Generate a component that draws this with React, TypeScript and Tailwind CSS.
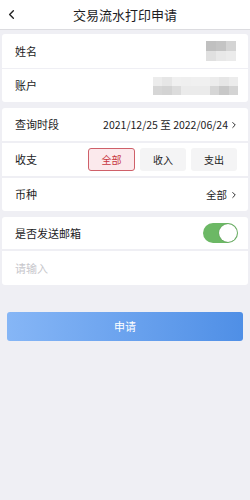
import { ChevronLeft, ChevronRight } from 'lucide-react'

const nameBlocks = [
  ['#c0c0c0', '#c4c4c4', '#d4d4d4'],
  ['#e0e0e0', '#e8e8e8', '#ebebeb'],
]

const accountBlocks = [
  ['#ececec', '#e6e6e6', '#f0f0f0', '#efefef', '#f0f0f0', '#f0f0f0', '#ececec', '#e6e6e6', '#ececec'],
  ['#d6d6d6', '#d3d3d3', '#dcdcdc', '#ebebeb', '#ebebeb', '#ebebeb', '#d6d6d6', '#c8c8c8', '#d4d4d4'],
]

function Mosaic({ rows, cell }: { rows: string[][]; cell: string }) {
  return (
    <div className="flex flex-col">
      {rows.map((row, i) => (
        <div key={i} className="flex">
          {row.map((c, j) => (
            <div key={j} className={cell} style={{ backgroundColor: c }} />
          ))}
        </div>
      ))}
    </div>
  )
}

export default function App() {
  return (
    <div
      className="w-[250px] h-[500px] bg-[#efeff4] text-[#1c1c1e] text-[11px]"
      style={{ fontFamily: '"Noto Sans CJK SC", "Noto Sans", sans-serif' }}
    >
      {/* Header */}
      <div className="relative h-[30px] bg-white border-b border-[#dcdce0] flex items-center justify-center">
        <ChevronLeft className="absolute left-[4px] top-[7px] h-[15px] w-[15px] text-[#222]" strokeWidth={2.2} />
        <span className="text-[13px]">交易流水打印申请</span>
      </div>

      {/* Card 1 */}
      <div className="mx-[2px] mt-[4px] bg-white rounded-[3px]">
        <div className="h-[35px] flex items-center justify-between pl-[13px] pr-[12px] border-b border-[#efeff4]">
          <span>姓名</span>
          <Mosaic rows={nameBlocks} cell="w-[10px] h-[10px]" />
        </div>
        <div className="h-[33px] flex items-center justify-between pl-[13px] pr-[10px]">
          <span>账户</span>
          <Mosaic rows={accountBlocks} cell="w-[9.5px] h-[9px]" />
        </div>
      </div>

      {/* Card 2 */}
      <div className="mx-[2px] mt-[6px] bg-white rounded-[3px]">
        <div className="h-[35px] flex items-center justify-between pl-[13px] pr-[9px] border-b-2 border-[#efeff4]">
          <span>查询时段</span>
          <div className="flex items-center gap-[1px]">
            <span className="text-[10.5px]">2021/12/25 至 2022/06/24</span>
            <ChevronRight className="h-[10px] w-[10px]" strokeWidth={2.2} />
          </div>
        </div>
        <div className="h-[35px] flex items-center justify-between pl-[13px] pr-[11px] border-b-2 border-[#efeff4]">
          <span>收支</span>
          <div className="flex items-center gap-[5px] text-[10px]">
            <div className="w-[47px] h-[23px] flex items-center justify-center rounded-[3px] border border-[#cf6069] bg-[#fbe9ec] text-[#c8363f]">全部</div>
            <div className="w-[46px] h-[23px] flex items-center justify-center rounded-[3px] bg-[#f4f4f5]">收入</div>
            <div className="w-[46px] h-[23px] flex items-center justify-center rounded-[3px] bg-[#f4f4f5]">支出</div>
          </div>
        </div>
        <div className="h-[33px] flex items-center justify-between pl-[13px] pr-[9px]">
          <span>币种</span>
          <div className="flex items-center gap-[2px]">
            <span className="text-[10.5px]">全部</span>
            <ChevronRight className="h-[10px] w-[10px]" strokeWidth={2.2} />
          </div>
        </div>
      </div>

      {/* Card 3 */}
      <div className="mx-[2px] mt-[6px] bg-white rounded-[3px]">
        <div className="h-[34px] flex items-center justify-between pl-[13px] pr-[10px] border-b-2 border-[#efeff4]">
          <span>是否发送邮箱</span>
          <div className="relative w-[35px] h-[20px] rounded-full bg-[#6cb865]">
            <div className="absolute right-[1px] top-[1px] w-[18px] h-[18px] rounded-full bg-white shadow-[0_0_1px_rgba(0,0,0,0.4)]" />
          </div>
        </div>
        <div className="h-[34px] flex items-center pl-[13px]">
          <span className="text-[#c7c7cc]">请输入</span>
        </div>
      </div>

      {/* Submit */}
      <div className="px-[7px] mt-[27px]">
        <button className="w-full h-[29px] rounded-[3px] bg-gradient-to-r from-[#86b6f6] to-[#4f8fe6] text-white text-[11px]">
          申请
        </button>
      </div>
    </div>
  )
}
